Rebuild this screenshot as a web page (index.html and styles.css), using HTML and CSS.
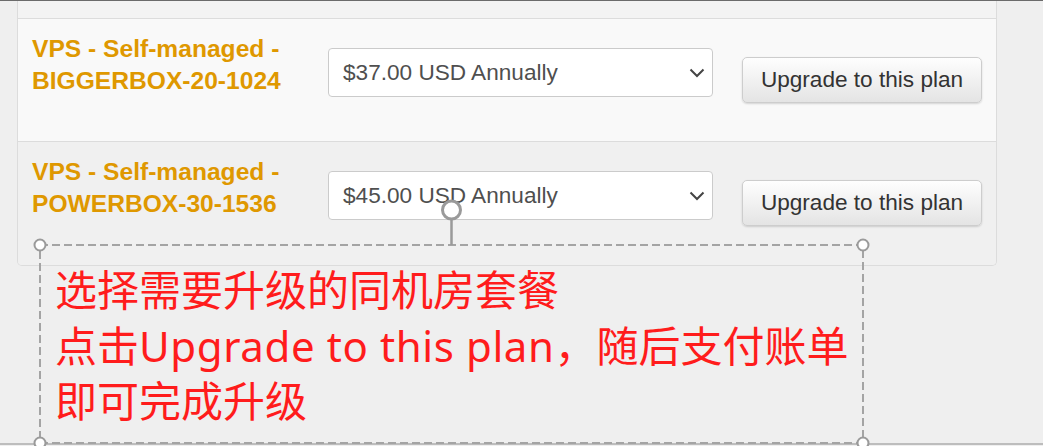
FILE: index.html
```html
<!DOCTYPE html>
<html lang="zh-CN">
<head>
    <meta charset="UTF-8">
    <meta name="viewport" content="width=device-width, initial-scale=1.0">
    <title>Upgrade Package</title>
    <link rel="stylesheet" href="styles.css">
</head>
<body>
    <div class="topbar"></div>

    <div class="panel">
        <div class="panel-head"></div>

        <div class="plan">
            <h4 class="plan-name">VPS - Self-managed -<br>BIGGERBOX-20-1024</h4>
            <div class="plan-select">
                <span>$37.00 USD Annually</span>
                <svg class="caret" width="16" height="10" viewBox="0 0 16 10"><path d="M1.5 1.5 L8 8 L14.5 1.5" fill="none" stroke="#444" stroke-width="2"/></svg>
            </div>
            <button class="plan-btn">Upgrade to this plan</button>
        </div>

        <div class="plan alt">
            <h4 class="plan-name">VPS - Self-managed -<br>POWERBOX-30-1536</h4>
            <div class="plan-select">
                <span>$45.00 USD Annually</span>
                <svg class="caret" width="16" height="10" viewBox="0 0 16 10"><path d="M1.5 1.5 L8 8 L14.5 1.5" fill="none" stroke="#444" stroke-width="2"/></svg>
            </div>
            <button class="plan-btn">Upgrade to this plan</button>
        </div>
    </div>

    <!-- annotation drawn over the screenshot -->
    <svg class="marks" width="1043" height="446" viewBox="0 0 1043 446">
        <line x1="0" y1="444" x2="1043" y2="444" stroke="#bdbdbd" stroke-width="2"/>
        <rect x="40" y="245" width="823" height="198" fill="none" stroke="#a4a4a4" stroke-width="2" stroke-dasharray="8 4"/>
        <line x1="451.5" y1="218" x2="451.5" y2="245" stroke="#9a9a9a" stroke-width="2.5"/>
        <circle cx="451.5" cy="210" r="9" fill="#fff" stroke="#9a9a9a" stroke-width="3"/>
        <circle cx="40" cy="245" r="5.5" fill="#fff" stroke="#9a9a9a" stroke-width="2"/>
        <circle cx="863" cy="245" r="5.5" fill="#fff" stroke="#9a9a9a" stroke-width="2"/>
        <circle cx="40" cy="443" r="5.5" fill="#fff" stroke="#9a9a9a" stroke-width="2"/>
        <circle cx="863" cy="443" r="5.5" fill="#fff" stroke="#9a9a9a" stroke-width="2"/>
    </svg>

    <div class="note">
        选择需要升级的同机房套餐<br>
        点击<span class="latin">Upgrade to this plan</span>，随后支付账单<br>
        即可完成升级
    </div>
</body>
</html>
```

FILE: styles.css
```css
body {
    margin: 0;
    position: relative;
    height: 446px;
    overflow: hidden;
    background: #efefef;
    font-family: "Liberation Sans", Arial, sans-serif;
}

.topbar {
    height: 1px;
    background: #6b6b6b;
}

.panel {
    width: 980px;
    box-sizing: border-box;
    margin-left: 17px;
    border: 1px solid #dcdcdc;
    border-top: none;
    border-radius: 0 0 5px 5px;
    overflow: hidden;
}

.panel-head {
    height: 17px;
    background: #f3f3f3;
    border-bottom: 1px solid #dcdcdc;
}

.plan {
    display: flex;
    align-items: flex-start;
    height: 123px;
    box-sizing: border-box;
    padding: 14px 0 0 14px;
    background: #f9f9f9;
    border-bottom: 1px solid #dcdcdc;
}

.plan.alt {
    background: #f0f0f0;
    border-bottom: none;
}

.plan-name {
    margin: 0;
    width: 296px;
    font-size: 24.6px;
    line-height: 31.7px;
    font-weight: bold;
    color: #df9800;
}

.plan-select {
    display: flex;
    align-items: center;
    justify-content: space-between;
    width: 385px;
    height: 49px;
    box-sizing: border-box;
    margin-top: 15px;
    padding: 0 7px 0 14px;
    background: #fff;
    border: 1px solid #cbcbcb;
    border-radius: 4px;
    font-size: 22.6px;
    color: #4f4f4f;
}

.plan-btn {
    width: 240px;
    height: 46px;
    margin: 24px 0 0 29px;
    padding: 0;
    border: 1px solid #cdcdcd;
    border-radius: 5px;
    background: linear-gradient(#fefefe, #e4e4e4);
    box-shadow: 0 1px 2px rgba(0, 0, 0, 0.15);
    font-family: inherit;
    font-size: 22.6px;
    color: #333;
    cursor: pointer;
}

.marks {
    position: absolute;
    top: 0;
    left: 0;
    pointer-events: none;
}

.note {
    position: absolute;
    top: 245px;
    left: 40px;
    width: 823px;
    box-sizing: border-box;
    padding: 17px 0 0 15px;
    white-space: nowrap;
    font-family: "Noto Sans", "Noto Sans CJK SC", sans-serif;
    font-size: 42px;
    line-height: 55.5px;
    color: #ff1c1c;
}

.note .latin {
    letter-spacing: 0.6px;
}
```
